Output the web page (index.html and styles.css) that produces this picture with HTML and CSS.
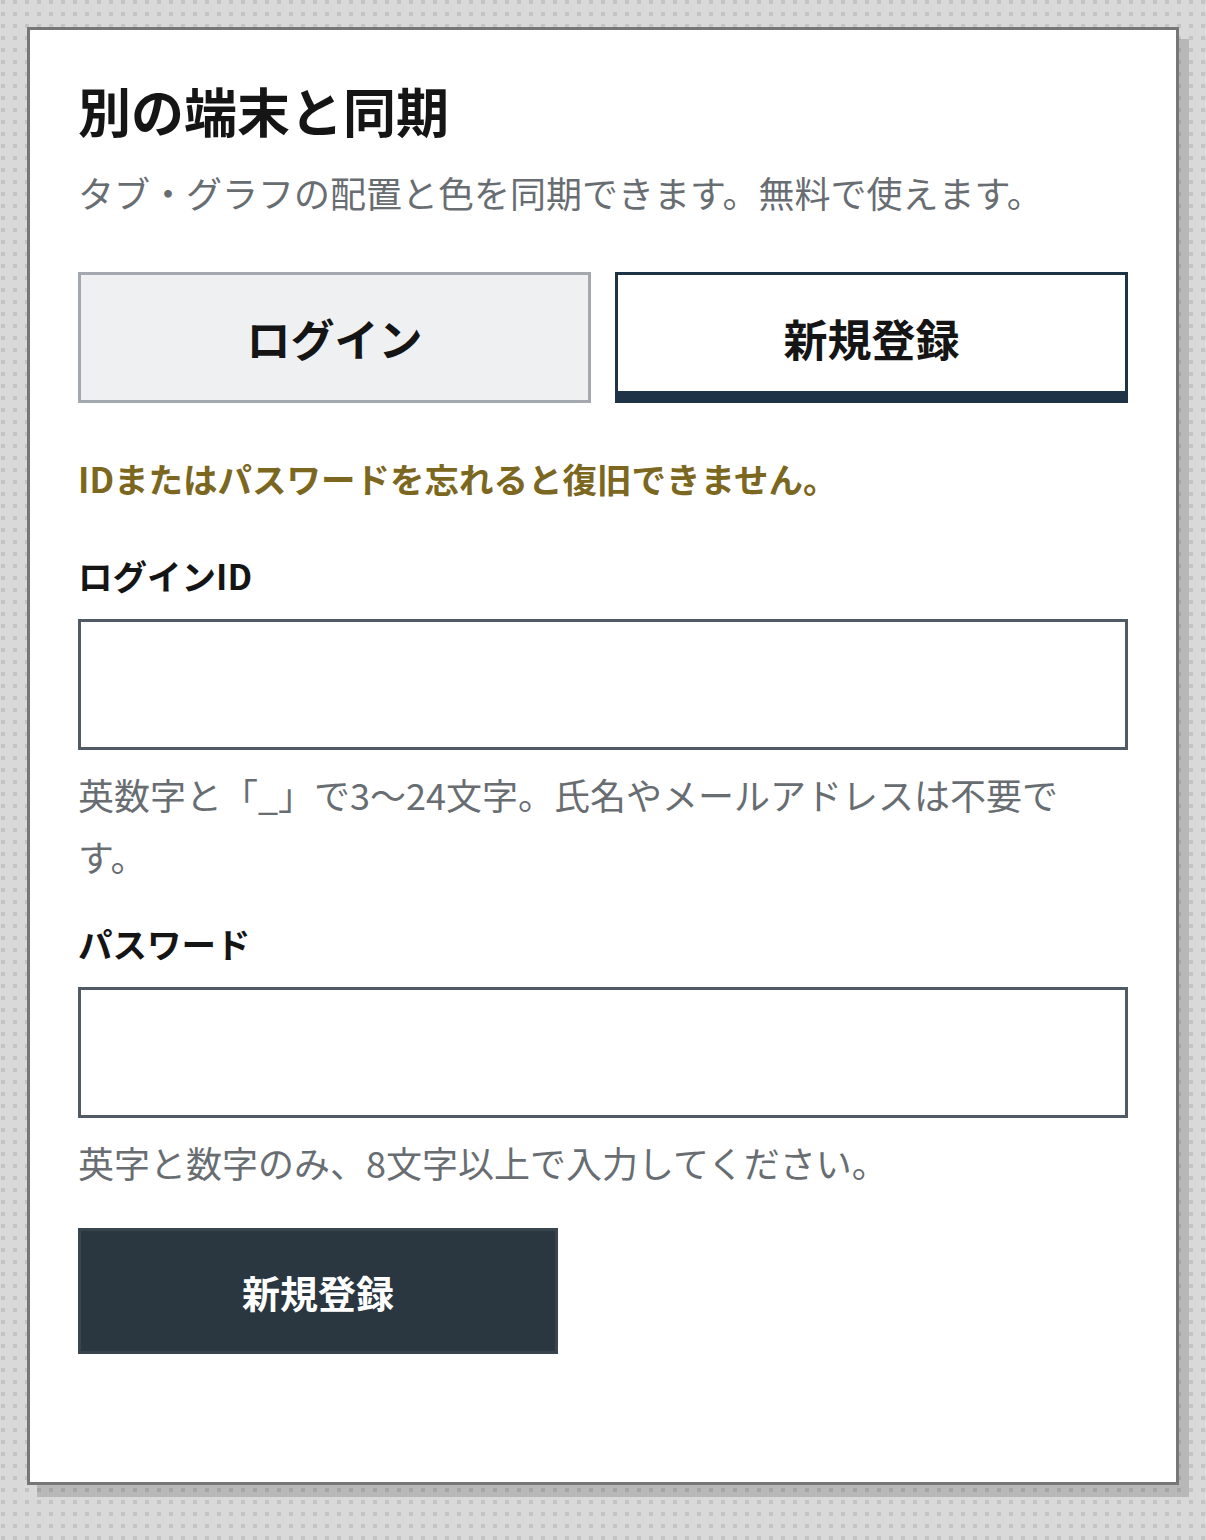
FILE: index.html
```html
<!DOCTYPE html>
<html lang="ja">
<head>
<meta charset="utf-8">
<title>別の端末と同期</title>
<link rel="stylesheet" href="styles.css">
</head>
<body>
<div class="card">
  <h1 class="title">別の端末と同期</h1>
  <p class="lead">タブ・グラフの配置と色を同期できます。無料で使えます。</p>
  <div class="tabs">
    <button class="tab">ログイン</button>
    <button class="tab tab-active">新規登録</button>
  </div>
  <p class="warning">IDまたはパスワードを忘れると復旧できません。</p>
  <div class="field">
    <label class="label" for="uid">ログインID</label>
    <input class="input" id="uid" type="text">
    <p class="hint">英数字と「_」で3〜24文字。氏名やメールアドレスは不要です。</p>
  </div>
  <div class="field field-next">
    <label class="label" for="pw">パスワード</label>
    <input class="input" id="pw" type="password">
    <p class="hint">英字と数字のみ、8文字以上で入力してください。</p>
  </div>
  <button class="submit">新規登録</button>
</div>
</body>
</html>
```
FILE: styles.css
```css
html, body {
  margin: 0;
  padding: 0;
}
body {
  width: 1206px;
  min-height: 1540px;
  background-color: #d9d9d9;
  background-image: conic-gradient(at 4px 4px, transparent 75%, #c4c4c4 0);
  background-size: 12px 12px;
  background-position: 1px 0;
  font-family: "Noto Sans CJK JP", "Noto Sans", sans-serif;
  color: #151515;
  padding-top: 27px;
  box-sizing: border-box;
}
.card {
  margin: 0 27px;
  background: #fff;
  border: 3px solid #777;
  box-shadow: 10px 12px 0 rgba(0, 0, 0, 0.15);
  padding: 48px 48px 128px 48px;
}
.title {
  margin: 0 0 20px;
  font-size: 53px;
  line-height: 65px;
  font-weight: 700;
  color: #151515;
}
.lead {
  margin: 0 0 51px;
  font-size: 36px;
  line-height: 58px;
  color: #686d72;
}
.tabs {
  display: grid;
  grid-template-columns: 1fr 1fr;
  gap: 24px;
  margin-bottom: 50px;
}
.tab {
  height: 131px;
  box-sizing: border-box;
  border: 3px solid #a3a9ae;
  background: #eef0f2;
  font-family: inherit;
  font-size: 44px;
  font-weight: 700;
  color: #151515;
  padding: 0;
}
.tab-active {
  background: #fff;
  border-color: #1f3347;
  box-shadow: inset 0 -9px 0 #1f3347;
}
.warning {
  margin: 0 0 46px;
  font-size: 34.5px;
  line-height: 51px;
  font-weight: 700;
  color: #7b6720;
}
.field {
  display: flex;
  flex-direction: column;
}
.field-next {
  margin-top: 31px;
}
.label {
  font-size: 34.5px;
  line-height: 51px;
  font-weight: 700;
  color: #151515;
  margin-bottom: 18px;
}
.input {
  height: 131px;
  box-sizing: border-box;
  border: 3px solid #505b65;
  border-radius: 0;
  background: #fff;
  margin: 0;
  font-family: inherit;
  font-size: 36px;
  padding: 0 20px;
}
.hint {
  margin: 13px 0 0;
  max-width: 1020px;
  font-size: 36px;
  line-height: 62px;
  color: #686d72;
}
.submit {
  display: block;
  margin-top: 35px;
  width: 480px;
  height: 126px;
  box-sizing: border-box;
  background: #2a3640;
  border: 3px solid #38444e;
  color: #fff;
  font-family: inherit;
  font-size: 38px;
  font-weight: 700;
  padding: 0;
}
```
